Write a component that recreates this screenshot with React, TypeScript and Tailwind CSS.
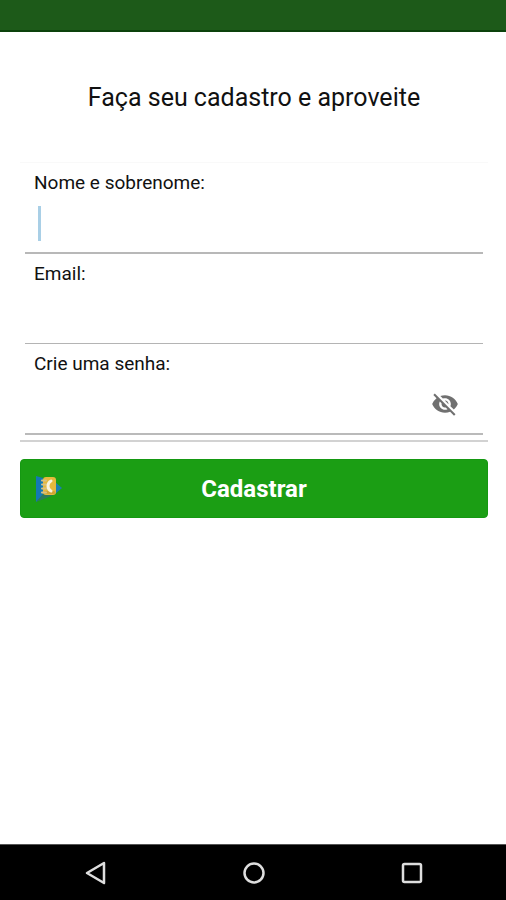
import { useState } from 'react';
import { MdVisibility, MdVisibilityOff } from 'react-icons/md';

const fields = [
  { id: 'name', label: 'Nome e sobrenome:', type: 'text', line: 'border-b-2 border-[#b8b8b8]' },
  { id: 'email', label: 'Email:', type: 'email', line: 'border-b border-[#b4b4b4]' },
  { id: 'password', label: 'Crie uma senha:', type: 'password', line: 'border-b-2 border-[#bababa]' },
];

function ContactsIcon() {
  return (
    <svg viewBox="0 0 28 28" className="size-7" aria-hidden="true">
      <path d="M1 1 L8 3 V22 L1 27 Z" fill="#1478b4" />
      <path d="M1 27 L8 19 H20 L14 22 Z" fill="#2b7a5c" />
      <path d="M20 7 L27 13 L20 19 Z" fill="#1a7fae" />
      <rect x="8" y="2" width="13" height="18" rx="3" fill="#e5b93c" />
      <rect x="9" y="16" width="11" height="3" rx="1" fill="#cfa433" />
      <path
        d="M7 5.500h4M7 9.500h4M7 13.500h4M7 17.500h4"
        stroke="#d8c083"
        strokeWidth="2"
        strokeLinecap="round"
      />
      <path
        d="M16 6 C12 8 12 14 16 16"
        fill="none"
        stroke="#f8f3df"
        strokeWidth="3"
        strokeLinecap="round"
      />
    </svg>
  );
}

export default function App() {
  const [visible, setVisible] = useState(false);

  return (
    <div className="flex min-h-screen flex-col bg-white font-['Roboto','Noto_Sans',sans-serif] text-[#111111]">
      {/* Status bar */}
      <header className="h-8 border-b-2 border-[#0c420c] bg-[#1d5a19]" />

      <main className="flex-1 pr-[18px] pl-5">
        <h1 className="pt-[50px] text-center text-[25px] leading-8">
          Faça seu cadastro e aproveite
        </h1>

        <form className="mt-12" onSubmit={(e) => e.preventDefault()}>
          <div className="border-t border-b-2 border-t-[#f9f9f9] border-b-[#d2d2d2] px-[5px] pb-[5px]">
            {fields.map((field) => (
              <div key={field.id} className={`pt-2 ${field.line}`}>
                <label htmlFor={field.id} className="block px-[9px] text-[19px] leading-6">
                  {field.label}
                </label>
                <div className="flex h-[57px] items-center pr-6 pl-[13px]">
                  {field.id === 'name' && <span className="h-[35px] w-[3px] bg-[#a9cfe6]" />}
                  <input
                    id={field.id}
                    type={field.id === 'password' && visible ? 'text' : field.type}
                    className="h-10 min-w-0 flex-1 bg-transparent text-[19px] caret-[#a9cfe6] outline-none"
                  />
                  {field.id === 'password' && (
                    <button
                      type="button"
                      aria-label={visible ? 'Ocultar senha' : 'Mostrar senha'}
                      onClick={() => setVisible(!visible)}
                      className="pb-0.5 text-[#707070]"
                    >
                      {visible ? <MdVisibility size={28} /> : <MdVisibilityOff size={28} />}
                    </button>
                  )}
                </div>
              </div>
            ))}
          </div>

          <button
            type="submit"
            className="mt-[17px] grid h-[59px] w-full grid-cols-[28px_1fr_28px] items-center rounded border border-[#159812] bg-[#1b9e14] px-3.5 text-2xl font-bold text-white"
          >
            <ContactsIcon />
            <span>Cadastrar</span>
          </button>
        </form>
      </main>

      {/* Android navigation bar */}
      <nav className="flex h-14 items-center justify-center gap-[134px] border-t border-[#555555] bg-black pl-px text-[#dedede]">
        <button type="button" aria-label="Voltar">
          <svg viewBox="0 0 24 24" className="size-6" fill="none" stroke="currentColor" strokeWidth="2.500" strokeLinejoin="round">
            <path d="M20 2 L3 12 L20 22 Z" />
          </svg>
        </button>
        <button type="button" aria-label="Início">
          <svg viewBox="0 0 24 24" className="size-6" fill="none" stroke="currentColor" strokeWidth="2.500">
            <circle cx="12" cy="12" r="9.500" />
          </svg>
        </button>
        <button type="button" aria-label="Recentes">
          <svg viewBox="0 0 24 24" className="size-6" fill="none" stroke="currentColor" strokeWidth="2.500">
            <rect x="3" y="3" width="18" height="18" rx="1.500" />
          </svg>
        </button>
      </nav>
    </div>
  );
}
